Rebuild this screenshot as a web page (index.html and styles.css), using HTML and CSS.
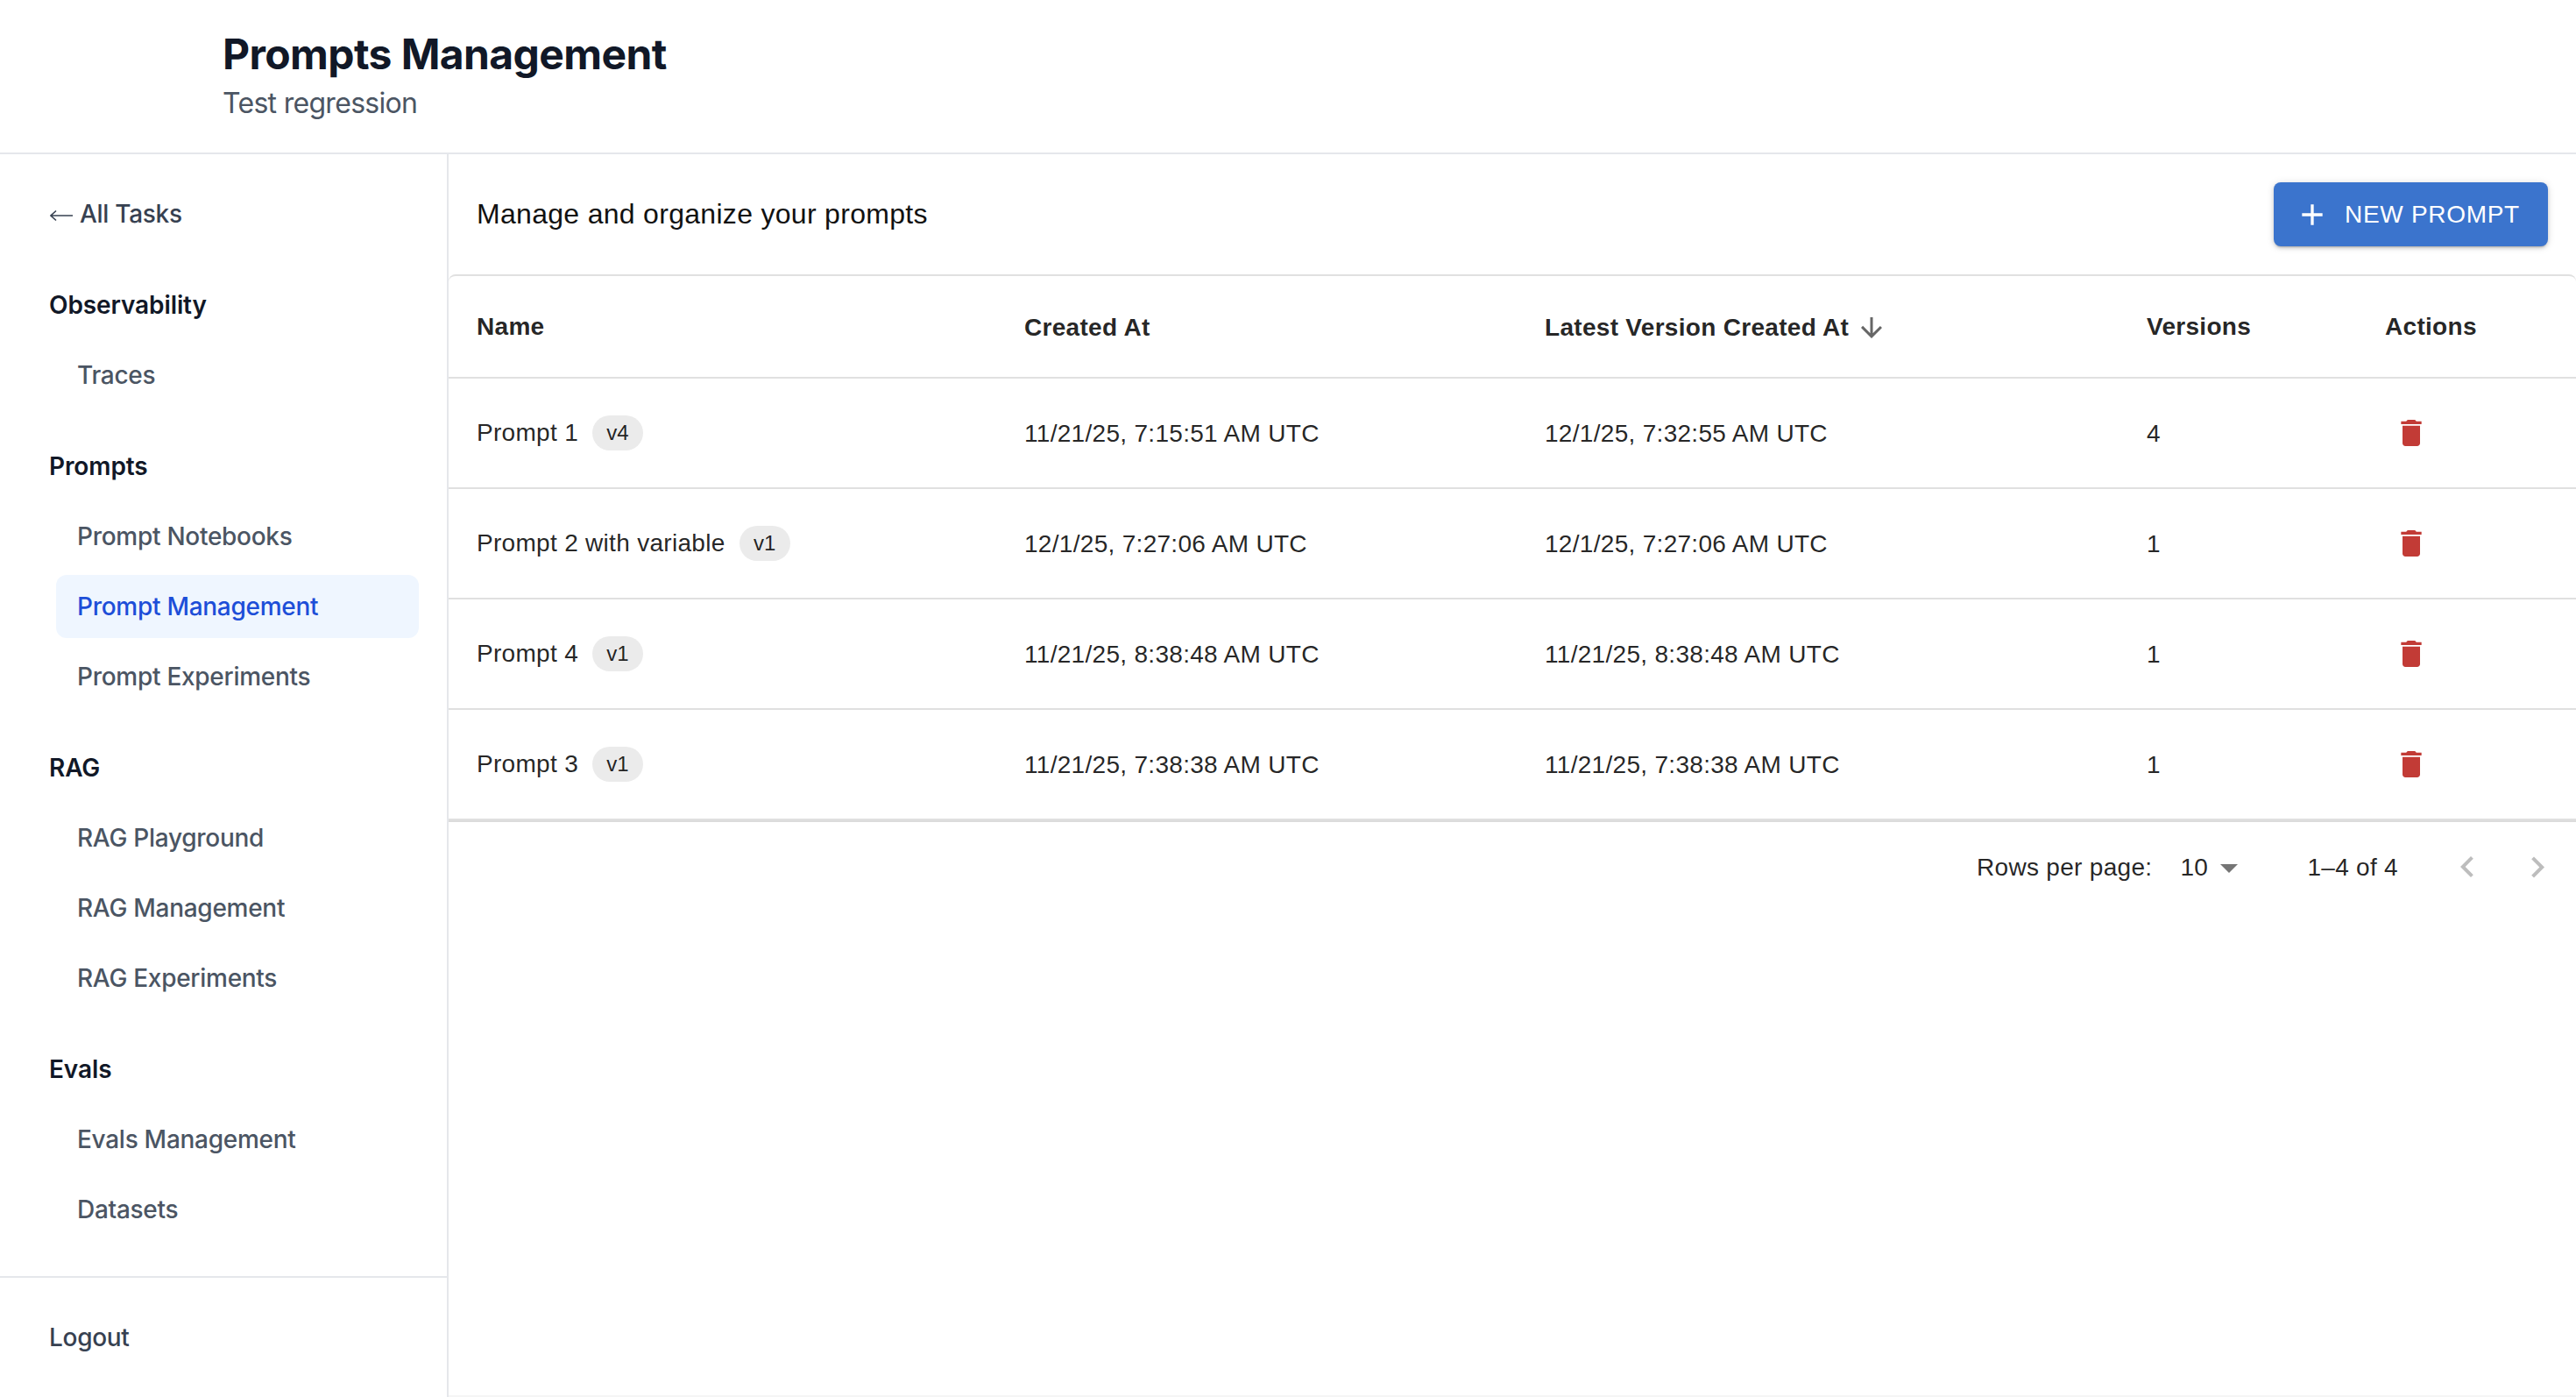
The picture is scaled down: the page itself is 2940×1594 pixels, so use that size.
FILE: index.html
```html
<!DOCTYPE html>
<html lang="en">
<head>
<meta charset="utf-8">
<title>Prompts Management</title>
<link rel="stylesheet" href="styles.css">
</head>
<body>
<div class="page">
  <header class="topbar">
    <h1 class="title">Prompts Management</h1>
    <p class="subtitle">Test regression</p>
  </header>
  <div class="body">
    <aside class="sidebar">
      <nav class="nav">
        <a class="back"><svg class="back-arrow" viewBox="0 0 26 14"><path d="M1 7h25M7 1.5 1 7l6 5.5" fill="none" stroke="currentColor" stroke-width="1.6"/></svg>All Tasks</a>
        <section class="group">
          <h2 class="group-title">Observability</h2>
          <a class="item">Traces</a>
        </section>
        <section class="group">
          <h2 class="group-title">Prompts</h2>
          <a class="item">Prompt Notebooks</a>
          <a class="item active">Prompt Management</a>
          <a class="item">Prompt Experiments</a>
        </section>
        <section class="group">
          <h2 class="group-title">RAG</h2>
          <a class="item">RAG Playground</a>
          <a class="item">RAG Management</a>
          <a class="item">RAG Experiments</a>
        </section>
        <section class="group">
          <h2 class="group-title">Evals</h2>
          <a class="item">Evals Management</a>
          <a class="item">Datasets</a>
        </section>
      </nav>
      <div class="side-foot"><a class="logout">Logout</a></div>
    </aside>
    <main class="main">
      <div class="toolbar">
        <p class="lead">Manage and organize your prompts</p>
        <button class="new-btn">
          <svg class="new-icon" viewBox="0 0 24 24"><path d="M19 13h-6v6h-2v-6H5v-2h6V5h2v6h6v2z"/></svg>
          <span>New Prompt</span>
        </button>
      </div>
      <div class="table-wrap">
        <table class="table">
          <thead>
            <tr>
              <th class="col-name"><span class="name-head">Name</span></th>
              <th class="col-created">Created At</th>
              <th class="col-latest"><span class="sort-head">Latest Version Created At<svg class="sort-icon" viewBox="0 0 24 24"><path d="m20 12-1.41-1.41L13 16.17V4h-2v12.17l-5.58-5.59L4 12l8 8 8-8z"/></svg></span></th>
              <th class="col-versions"><span class="name-head">Versions</span></th>
              <th class="col-actions"><span class="name-head">Actions</span></th>
            </tr>
          </thead>
          <tbody>
            <tr>
              <td><span class="name-cell">Prompt 1<span class="chip">v4</span></span></td>
              <td>11/21/25, 7:15:51 AM UTC</td>
              <td>12/1/25, 7:32:55 AM UTC</td>
              <td>4</td>
              <td><button class="del"><svg class="del-icon" viewBox="0 0 24 24"><path d="M6 19c0 1.1.9 2 2 2h8c1.1 0 2-.9 2-2V7H6v12zM19 4h-3.5l-1-1h-5l-1 1H5v2h14V4z"/></svg></button></td>
            </tr>
            <tr>
              <td><span class="name-cell">Prompt 2 with variable<span class="chip">v1</span></span></td>
              <td>12/1/25, 7:27:06 AM UTC</td>
              <td>12/1/25, 7:27:06 AM UTC</td>
              <td>1</td>
              <td><button class="del"><svg class="del-icon" viewBox="0 0 24 24"><path d="M6 19c0 1.1.9 2 2 2h8c1.1 0 2-.9 2-2V7H6v12zM19 4h-3.5l-1-1h-5l-1 1H5v2h14V4z"/></svg></button></td>
            </tr>
            <tr>
              <td><span class="name-cell">Prompt 4<span class="chip">v1</span></span></td>
              <td>11/21/25, 8:38:48 AM UTC</td>
              <td>11/21/25, 8:38:48 AM UTC</td>
              <td>1</td>
              <td><button class="del"><svg class="del-icon" viewBox="0 0 24 24"><path d="M6 19c0 1.1.9 2 2 2h8c1.1 0 2-.9 2-2V7H6v12zM19 4h-3.5l-1-1h-5l-1 1H5v2h14V4z"/></svg></button></td>
            </tr>
            <tr>
              <td><span class="name-cell">Prompt 3<span class="chip">v1</span></span></td>
              <td>11/21/25, 7:38:38 AM UTC</td>
              <td>11/21/25, 7:38:38 AM UTC</td>
              <td>1</td>
              <td><button class="del"><svg class="del-icon" viewBox="0 0 24 24"><path d="M6 19c0 1.1.9 2 2 2h8c1.1 0 2-.9 2-2V7H6v12zM19 4h-3.5l-1-1h-5l-1 1H5v2h14V4z"/></svg></button></td>
            </tr>
          </tbody>
        </table>
      </div>
      <div class="pager">
        <span class="rows-label">Rows per page:</span>
        <span class="rows-select">10<svg class="caret" viewBox="0 0 24 24"><path d="m7 10 5 5 5-5z"/></svg></span>
        <span class="range">1–4 of 4</span>
        <span class="pager-btn"><svg class="chev" viewBox="0 0 24 24"><path d="M15.41 16.09l-4.58-4.59 4.58-4.59L14 5.5l-6 6 6 6z"/></svg></span>
        <span class="pager-btn"><svg class="chev" viewBox="0 0 24 24"><path d="M8.59 16.34l4.58-4.59-4.58-4.59L10 5.75l6 6-6 6z"/></svg></span>
      </div>
    </main>
  </div>
</div>
</body>
</html>
```

FILE: styles.css
```css
* { box-sizing: border-box; }
html, body { margin: 0; padding: 0; background: #fff; }
.page {
  width: 2940px;
  height: 1594px;
  display: flex;
  flex-direction: column;
  overflow: hidden;
  font-family: "Inter", "Liberation Sans", sans-serif;
}
.topbar {
  height: 176px;
  padding: 30px 0 0 254px;
  border-bottom: 2px solid #e5e7eb;
}
.title {
  margin: 0;
  font-size: 48px;
  line-height: 64px;
  font-weight: 700;
  letter-spacing: -0.6px;
  color: #111827;
}
.subtitle {
  margin: 0;
  font-size: 32px;
  line-height: 48px;
  letter-spacing: -0.7px;
  color: #4b5563;
}
.body { flex: 1; display: flex; min-height: 0; }
.sidebar {
  width: 512px;
  flex: none;
  display: flex;
  flex-direction: column;
  border-right: 2px solid #e5e7eb;
}
.nav {
  flex: 1;
  padding: 48px 32px 0 56px;
  display: flex;
  flex-direction: column;
  gap: 48px;
}
.back, .logout {
  display: flex;
  align-items: center;
  font-size: 28px;
  line-height: 40px;
  font-weight: 500;
  letter-spacing: -0.3px;
  color: #374151;
}
.back { margin-bottom: 16px; }
.back-arrow { width: 26px; height: 14px; margin: 3px 8px 0 1px; flex: none; }
.group { display: flex; flex-direction: column; gap: 8px; }
.group-title {
  margin: 0 0 16px;
  font-size: 28px;
  line-height: 40px;
  font-weight: 600;
  letter-spacing: -0.1px;
  color: #111827;
}
.item {
  display: flex;
  align-items: center;
  height: 72px;
  margin-left: 8px;
  padding-left: 24px;
  border-radius: 12px;
  font-size: 28px;
  font-weight: 500;
  letter-spacing: -0.28px;
  color: #4b5563;
}
.item.active { background: #eff6ff; color: #1d4ed8; }
.side-foot {
  height: 138px;
  padding: 48px 56px;
  border-top: 2px solid #e5e7eb;
}
.main {
  flex: 1;
  min-width: 0;
  border-bottom: 2px solid #f5f5f5;
  font-family: "Liberation Sans", Arial, sans-serif;
  letter-spacing: 0.3px;
  color: rgba(0, 0, 0, 0.87);
}
.toolbar {
  height: 137px;
  padding: 0 32px;
  display: flex;
  align-items: center;
  justify-content: space-between;
}
.lead { margin: 0; font-size: 32px; color: #111; }
.new-btn {
  height: 73px;
  width: 313px;
  padding: 0 0 0 24px;
  display: flex;
  align-items: center;
  border: 0;
  border-radius: 8px;
  background: #3b74cd;
  box-shadow: 0 3px 2px -2px rgba(0,0,0,.2), 0 2px 4px 0 rgba(0,0,0,.14), 0 1px 10px 0 rgba(0,0,0,.12);
  color: #fff;
  font-family: inherit;
  font-size: 28px;
  letter-spacing: 0.7px;
  text-transform: uppercase;
  white-space: nowrap;
}
.new-icon { width: 40px; height: 40px; margin-right: 17px; fill: #fff; }
.table-wrap {
  border-top: 2px solid #e0e0e0;
  border-bottom: 2px solid #dcdcdc;
  border-radius: 8px 8px 0 0;
  overflow: hidden;
}
.table {
  width: 2428px;
  table-layout: fixed;
  border-collapse: separate;
  border-spacing: 0;
  font-size: 28px;
}
.table th, .table td {
  padding: 0 32px;
  text-align: left;
  vertical-align: middle;
  border-bottom: 2px solid #e0e0e0;
}
.table th { height: 117px; font-weight: 700; color: rgba(0,0,0,.87); padding-top: 2px; }
.table td { height: 126px; padding-top: 1px; }
.col-name { width: 625px; }
.col-created { width: 594px; }
.col-latest { width: 687px; }
.col-versions { width: 272px; }
.col-actions { width: 250px; }
.name-head { display: block; margin-top: -2px; }
.sort-head { display: inline-flex; align-items: center; }
.sort-icon { width: 36px; height: 36px; margin-left: 8px; fill: #666; }
.name-cell { display: inline-flex; align-items: center; margin-top: -1px; }
.chip {
  display: inline-flex;
  align-items: center;
  justify-content: center;
  width: 58px;
  height: 40px;
  margin-left: 16px;
  border-radius: 20px;
  background: #ebebeb;
  font-size: 24px;
  letter-spacing: 0;
}
.del {
  display: block;
  width: 60px;
  height: 60px;
  padding: 10px;
  margin-top: -1px;
  border: 0;
  background: none;
}
.del-icon { display: block; width: 40px; height: 40px; fill: #c23b36; }
.pager {
  height: 104px;
  padding-right: 4px;
  display: flex;
  align-items: center;
  justify-content: flex-end;
  font-size: 28px;
}
.rows-label { margin-right: 32px; }
.rows-select { display: inline-flex; align-items: center; width: 145px; }
.caret { width: 48px; height: 48px; fill: #757575; }
.range { margin-right: 39px; }
.pager-btn { width: 80px; height: 80px; display: flex; align-items: center; justify-content: center; }
.chev { width: 48px; height: 48px; fill: #bdbdbd; }
```
